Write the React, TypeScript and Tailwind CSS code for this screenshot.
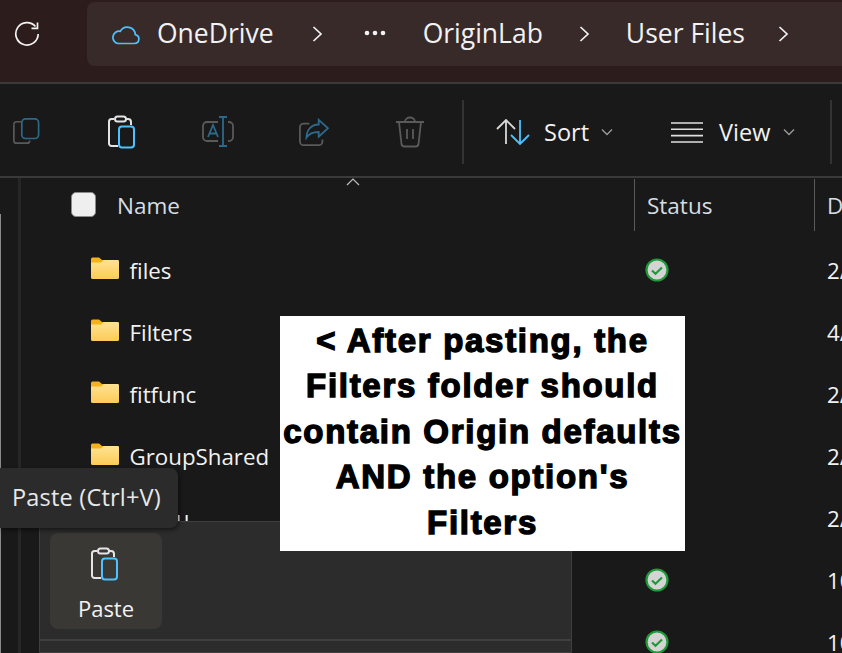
const segoe = "font-['Open_Sans',sans-serif]";

const rows = [
  { name: "files", date: "2/", ok: true },
  { name: "Filters", date: "4/", ok: false },
  { name: "fitfunc", date: "2/", ok: false },
  { name: "GroupShared", date: "2/", ok: false },
  { name: "Menu", date: "2/", ok: false },
  { name: "", date: "10", ok: true },
  { name: "", date: "10", ok: true },
];

function Chevron() {
  return (
    <svg width="14" height="18" viewBox="0 0 14 18" fill="none" stroke="#f2f2f2" strokeWidth="1.7" className="block">
      <path d="M2.5 2l7.5 7-7.5 7" />
    </svg>
  );
}

function SmallChevron() {
  return (
    <svg width="12" height="8" viewBox="0 0 12 8" fill="none" stroke="#9a9a9a" strokeWidth="1.4" className="block">
      <path d="M1 1.5l5 5 5-5" />
    </svg>
  );
}

function PasteIcon() {
  return (
    <svg width="30" height="34" viewBox="0 0 30 34" fill="none" strokeWidth="2" className="block">
      <path d="M12 31H5.500A2.500 2.500 0 0 1 3 28.500V6.500A2.500 2.500 0 0 1 5.500 4H8M20 4h2a3 3 0 0 1 3 3v3" stroke="#e4e4e4" />
      <rect x="9" y="1.500" width="11" height="5" rx="2.500" stroke="#e4e4e4" />
      <rect x="13" y="11.500" width="15" height="21" rx="3" stroke="#4cc2ff" />
    </svg>
  );
}

function Folder() {
  return (
    <svg width="28" height="22" viewBox="0 0 28 22" className="block shrink-0 -translate-y-[3px]">
      <defs>
        <linearGradient id="folderBody" x1="0" y1="0" x2="0" y2="1">
          <stop offset="0" stopColor="#ffe391" />
          <stop offset="1" stopColor="#fbcb58" />
        </linearGradient>
      </defs>
      <path d="M0 2a1.500 1.500 0 0 1 1.500-1.500H8l3 2.500H26.500A1.500 1.500 0 0 1 28 4.500V6H0z" fill="#f6b21c" />
      <path d="M0 5.500h10l3-2.500h13.500A1.500 1.500 0 0 1 28 4.500v16a1.500 1.500 0 0 1-1.500 1.500h-25A1.500 1.500 0 0 1 0 20.500z" fill="url(#folderBody)" />
    </svg>
  );
}

function SyncOk() {
  return (
    <svg width="24" height="24" viewBox="0 0 24 24" className="block -translate-y-[1px]">
      <circle cx="12" cy="12" r="10.500" fill="#d4d4d4" stroke="#1f9a38" strokeWidth="2.200" />
      <path d="M7 12.500l3.500 3.200L17 9.500" fill="none" stroke="#1f9a38" strokeWidth="2.200" />
    </svg>
  );
}

export default function App() {
  return (
    <div className={`relative h-[653px] w-[842px] overflow-hidden bg-[#191919] ${segoe} text-[#f2f2f2]`}>
      {/* address bar */}
      <div className="flex h-[82px] items-start bg-[#2c1c1c] pt-[2px]">
        <div className="flex h-[64px] w-[87px] shrink-0 items-center pl-[14px]">
          <svg width="26" height="26" viewBox="0 0 26 26" fill="none" stroke="#f4f4f4" strokeWidth="1.700">
            <path d="M21.500 5.500A11.200 11.200 0 1 0 24.200 13" />
            <path d="M23.500 1.500v5.800h-6" />
          </svg>
        </div>
        <div className="flex h-[64px] flex-1 items-center rounded-l-[8px] bg-[#392a2a] pl-[24px] text-[26.500px]">
          <svg width="29" height="21" viewBox="0 0 29 21" fill="none" stroke="#4cc2ff" strokeWidth="1.700">
            <path d="M7 19.500h16.500a4.500 4.500 0 0 0 .8-8.900 8 8 0 0 0-15-3.300A6.200 6.200 0 0 0 7 19.500z" />
          </svg>
          <span className="ml-[17px]">OneDrive</span>
          <span className="ml-[37px]"><Chevron /></span>
          <svg width="22" height="6" viewBox="0 0 22 6" fill="#f2f2f2" className="ml-[39px] -translate-y-[1px]">
            <circle cx="3" cy="3" r="2.300" />
            <circle cx="11" cy="3" r="2.300" />
            <circle cx="19" cy="3" r="2.300" />
          </svg>
          <span className="ml-[37px]">OriginLab</span>
          <span className="ml-[35px]"><Chevron /></span>
          <span className="ml-[34px]">User Files</span>
          <span className="ml-[32px]"><Chevron /></span>
        </div>
      </div>

      {/* toolbar */}
      <div className="flex h-[96px] items-center border-y-2 border-[#3a3a3a] pl-[12px] pt-[4px]">
        <svg width="28" height="28" viewBox="0 0 30 30" fill="none" strokeWidth="1.800" className="shrink-0">
          <path d="M2 7v17a3 3 0 0 0 3 3h11a3 3 0 0 0 3-3" stroke="#5a5a5a" />
          <path d="M2 7a3 3 0 0 1 3-3h5" stroke="#5a5a5a" />
          <rect x="10.500" y="1" width="18" height="21" rx="4" stroke="#2c6a8c" />
        </svg>
        <span className="ml-[66px]"><PasteIcon /></span>
        <svg width="32" height="32" viewBox="0 0 32 32" fill="none" strokeWidth="1.800" className="ml-[66px]">
          <path d="M16 6H5a4 4 0 0 0-4 4v11a4 4 0 0 0 4 4h11M26 6h1a4 4 0 0 1 4 4v11a4 4 0 0 1-4 4h-1" stroke="#5a5a5a" />
          <path d="M17 1h8M17 30h8M21 1v29M6 21l5-12 5 12M7.500 17.500h7" stroke="#2c6a8c" />
        </svg>
        <svg width="30" height="30" viewBox="0 0 32 32" fill="none" strokeWidth="1.900" className="ml-[65px]">
          <path d="M11 7H5a4 4 0 0 0-4 4v15a4 4 0 0 0 4 4h16a4 4 0 0 0 4-4v-2" stroke="#5a5a5a" />
          <path d="M21 3l10 9-10 9v-5c-6 0-10 1-13 6 0-8 5-14 13-14z" stroke="#2c6a8c" />
        </svg>
        <svg width="30" height="32" viewBox="0 0 30 32" fill="none" stroke="#5a5a5a" strokeWidth="1.800" className="ml-[66px]">
          <path d="M1 6h28M4 6l2.500 22a3 3 0 0 0 3 2.500h11a3 3 0 0 0 3-2.500L26 6M10 6c0-6 10-6 10 0M12 13v10M18 13v10" />
        </svg>
        <div className="ml-[37px] h-[64px] w-[2px] bg-[#333333]" />
        <svg width="34" height="26" viewBox="0 0 34 26" fill="none" strokeWidth="1.800" className="ml-[32px]">
          <path d="M1 10l9-9 9 9M10 1v24" stroke="#d8d8d8" />
          <path d="M15 16l9 9 9-9M24 1v24" stroke="#4cc2ff" />
        </svg>
        <span className="ml-[14px] mt-[2px] text-[23.500px]">Sort</span>
        <span className="ml-[12px]"><SmallChevron /></span>
        <svg width="32" height="21" viewBox="0 0 32 21" stroke="#e0e0e0" strokeWidth="1.600" className="ml-[58px]">
          <path d="M0 1h32M0 7.300h32M0 13.600h32M0 20h32" />
        </svg>
        <span className="ml-[16px] mt-[2px] text-[23.500px]">View</span>
        <span className="ml-[13px]"><SmallChevron /></span>
        <div className="ml-[35px] h-[64px] w-[2px] bg-[#333333]" />
      </div>

      {/* file list */}
      <div className="flex">
        <div className="flex w-[72px] shrink-0 items-start">
          <div className="mt-[36px] h-[440px] w-[1px] bg-[#8a8a8a]" />
          <div className="ml-[17px] h-[475px] w-[3px] bg-[#262626]" />
        </div>
        <div className="flex-1">
          <div className="flex h-[53px] items-center text-[22.500px] text-[#d6dde3]">
            <div className="h-[25px] w-[25px] -translate-x-[1px] rounded-[5px] border border-[#8a8a8a] bg-[#efefef]" />
            <span className="ml-[20px] mt-[2px] w-[517px]">Name</span>
            <div className="h-[52px] w-[1px] bg-[#5a5a5a]" />
            <span className="ml-[12px] mt-[2px] w-[167px]">Status</span>
            <div className="h-[52px] w-[1px] bg-[#5a5a5a]" />
            <span className="ml-[12px] mt-[2px]">D</span>
          </div>
          <div className="mt-[9px]">
            {rows.map((row, i) => (
              <div key={i} className="flex h-[62px] items-center text-[22.300px]">
                <div className="ml-[19px] w-[39px] shrink-0">{row.name && <Folder />}</div>
                <span className="w-[515px] -translate-x-[0.500px]">{row.name}</span>
                <span className="w-[182px]">{row.ok && <SyncOk />}</span>
                <span>{row.date}</span>
              </div>
            ))}
          </div>
        </div>
      </div>

      {/* sort caret */}
      <svg width="14" height="8" viewBox="0 0 14 8" fill="none" stroke="#bdbdbd" strokeWidth="1.200" className="absolute left-[346px] top-[178px]">
        <path d="M1 7l6-6 6 6" />
      </svg>

      {/* flyout */}
      <div className="absolute left-[39px] top-[521px] h-[132px] w-[533px] rounded-tl-[8px] border border-[#3f3f3f] bg-[#2c2c2c]">
        <div className="ml-[10px] mt-[11px] flex h-[96px] w-[112px] flex-col items-center rounded-[8px] bg-[#3a3834] pt-[14px]">
          <span className="-translate-x-[2px]"><PasteIcon /></span>
          <span className="mt-[12px] text-[22px] leading-[30px]">Paste</span>
        </div>
        <div className="mt-[10px] h-[2px] bg-[#3f3f3f]" />
      </div>

      {/* tooltip */}
      <div className="absolute left-0 top-[468px] flex h-[60px] w-[178px] items-center rounded-r-[8px] bg-[#2b2b2b] pl-[12px] text-[23.500px] tracking-[0.200px] text-[#e8e8e8] shadow-[1px_2px_4px_rgba(0,0,0,0.5)]">
        Paste (Ctrl+V)
      </div>

      {/* note pasted over the screenshot */}
      <div className="absolute left-[280px] top-[316px] flex h-[235px] w-[405px] items-center justify-center bg-white pb-[4px] text-center font-['Liberation_Sans',sans-serif] text-[33px] font-bold leading-[45.500px] text-black">
        <p className="whitespace-nowrap tracking-[1.700px] [-webkit-text-stroke:1.4px_black]">
          &lt; After pasting, the
          <br />
          Filters folder should
          <br />
          contain Origin defaults
          <br />
          AND the option's
          <br />
          Filters
        </p>
      </div>
    </div>
  );
}
